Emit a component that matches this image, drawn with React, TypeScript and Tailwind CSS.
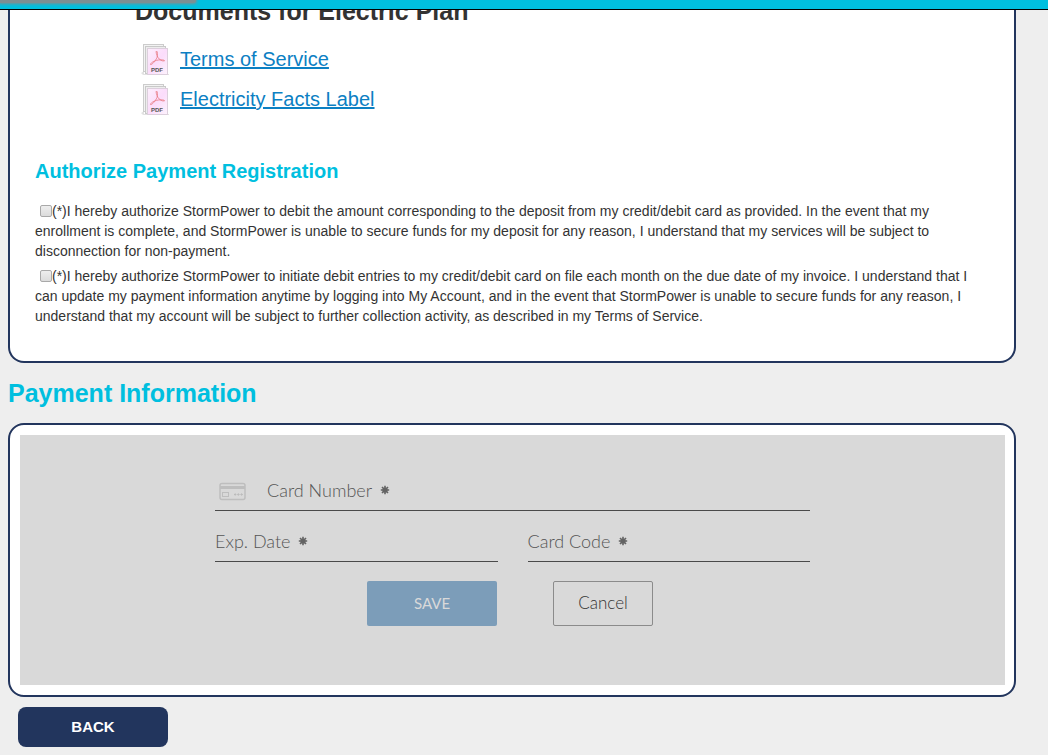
import { useState } from "react";

const documents = ["Terms of Service", "Electricity Facts Label"];

const authorizations = [
  {
    id: "deposit",
    text: "(*)I hereby authorize StormPower to debit the amount corresponding to the deposit from my credit/debit card as provided. In the event that my enrollment is complete, and StormPower is unable to secure funds for my deposit for any reason, I understand that my services will be subject to disconnection for non-payment.",
  },
  {
    id: "monthly",
    text: "(*)I hereby authorize StormPower to initiate debit entries to my credit/debit card on file each month on the due date of my invoice. I understand that I can update my payment information anytime by logging into My Account, and in the event that StormPower is unable to secure funds for any reason, I understand that my account will be subject to further collection activity, as described in my Terms of Service.",
  },
];

const PdfIcon = () => (
  <svg className="h-8 w-8 shrink-0" viewBox="0 0 32 32" aria-hidden="true">
    <defs>
      <linearGradient id="page" x1="0" y1="0" x2="1" y2="1">
        <stop offset="0" stopColor="#fdf0fd" />
        <stop offset="0.5" stopColor="#fbdcfb" />
        <stop offset="1" stopColor="#fdf3fd" />
      </linearGradient>
    </defs>
    <path d="M2 30 L5 28 V31 H30 V32 H4Z" fill="#e2e2e2" />
    <rect x="4.5" y="1.5" width="20" height="27" fill="#f3f3f3" stroke="#cccccc" />
    <rect x="6.5" y="3.5" width="20" height="27" fill="#ededed" stroke="#c9c9c9" />
    <rect x="8.5" y="5.5" width="20" height="26" fill="url(#page)" stroke="#dccfdc" />
    <path
      d="M17.5 8 C16.5 8.5 17.5 11.5 19 14.5 C20.5 17 23.5 18.5 25.5 17.8 C26 16.8 21 16.4 17.5 17.4 C14 18.4 11 20.5 11.5 21.6 C12.7 22.2 16.5 18 18 14.5 C18.8 11.5 18.6 8.5 17.5 8"
      fill="none"
      stroke="#e87882"
      strokeWidth="0.8"
    />
    <text
      x="12"
      y="29"
      fontFamily="Liberation Sans, Arial, sans-serif"
      fontSize="6"
      fontWeight="bold"
      fill="#555555"
    >
      PDF
    </text>
  </svg>
);

const CardIcon = () => (
  <svg className="h-5 w-7 shrink-0" viewBox="0 0 28 20" fill="none" aria-hidden="true">
    <rect x="1" y="1.5" width="25" height="16" rx="2" stroke="#bebebe" strokeWidth="1.5" />
    <rect x="1" y="4" width="25" height="3" fill="#bebebe" />
    <rect x="3.5" y="10.5" width="6" height="4" stroke="#bebebe" />
    <path
      d="M15 12.5h2.4M16.2 11.3v2.4M18.2 12.5h2.4M19.4 11.3v2.4M21.4 12.5h2.4M22.6 11.3v2.4"
      stroke="#bcbcbc"
      strokeWidth="1"
    />
  </svg>
);

const RequiredMark = () => (
  <svg className="h-[10px] w-[10px] shrink-0" viewBox="0 0 10 10" aria-hidden="true">
    <path
      d="M5 0.8V9.2M0.8 5H9.2M2 2L8 8M8 2L2 8"
      stroke="#636363"
      strokeWidth="1.6"
    />
    <circle cx="5" cy="5" r="2.6" fill="#636363" />
  </svg>
);

interface FieldProps {
  id: string;
  label: string;
  withIcon?: boolean;
}

const Field = ({ id, label, withIcon }: FieldProps) => (
  <div className="flex h-[51px] min-w-0 flex-1 items-center border-b border-[#4a4a4a] pt-[10px]">
    {withIcon && (
      <span className="mr-5 ml-1 pt-1">
        <CardIcon />
      </span>
    )}
    <label
      htmlFor={id}
      className="flex shrink-0 items-center gap-2 text-lg leading-6 font-light text-[#555555]"
    >
      {label}
      <RequiredMark />
    </label>
    <input id={id} type="text" className="min-w-0 flex-1 bg-transparent pl-2 outline-none" />
  </div>
);

export default function App() {
  const [checked, setChecked] = useState<string[]>([]);

  const toggle = (id: string) => {
    setChecked(checked.includes(id) ? checked.filter((c) => c !== id) : [...checked, id]);
  };

  return (
    <div className="min-h-screen bg-[#eeeeee] font-['Liberation_Sans',Arial,sans-serif] text-[#333333]">
      <header className="sticky top-0 z-10 h-[10px] overflow-hidden border-b border-black bg-[#00bfdf]">
        <div className="h-[3px] w-[196px] rounded-br bg-[#7b8f93] shadow-[0_0_3px_1px_#7b8f93]" />
      </header>

      <main className="pr-8 pl-2">
        <section className="rounded-b-2xl border-2 border-t-0 border-[#22355d] bg-white px-[25px] pb-[35px]">
          <h2 className="-mt-[13px] pt-px pl-[100px] text-[25px] leading-[26px] font-bold">
            Documents for Electric Plan
          </h2>
          <ul className="mt-[19px] space-y-2 pl-[104px]">
            {documents.map((name) => (
              <li key={name} className="flex h-8 items-center gap-[9px]">
                <PdfIcon />
                <a href="#" className="text-xl text-[#0c80c3] underline">
                  {name}
                </a>
              </li>
            ))}
          </ul>

          <h3 className="mt-10 text-xl leading-8 font-bold text-[#00bfdf]">
            Authorize Payment Registration
          </h3>
          <div className="mt-[14px] space-y-[5px] text-sm">
            {authorizations.map((item) => (
              <label key={item.id} className="block max-w-[945px]">
                <input
                  type="checkbox"
                  checked={checked.includes(item.id)}
                  onChange={() => toggle(item.id)}
                  className="ml-[5px] h-3 w-3 appearance-none rounded-xs border border-[#a9a9a9] bg-linear-to-b from-[#eeeeee] to-[#dcdcdc] align-[-1px] checked:bg-[#22355d]"
                />
                {item.text}
              </label>
            ))}
          </div>
        </section>

        <h2 className="mt-3 text-[25px] leading-9 font-bold text-[#00bfdf]">
          Payment Information
        </h2>

        <section className="mt-3 rounded-2xl border-2 border-[#22355d] bg-white py-[10px] pr-[9px] pl-[10px]">
          <form
            className="bg-[#d9d9d9] px-4 pt-[25px] pb-[59px] font-[Lato,'Open_Sans',sans-serif]"
            onSubmit={(e) => e.preventDefault()}
          >
            <div className="mx-auto max-w-[595px]">
              <div className="flex">
                <Field id="card-number" label="Card Number" withIcon />
              </div>
              <div className="flex gap-[30px]">
                <Field id="exp-date" label="Exp. Date" />
                <Field id="card-code" label="Card Code" />
              </div>
              <div className="mt-[19px] flex justify-center gap-14 pr-[5px]">
                <button
                  type="submit"
                  className="h-[45px] w-[130px] rounded-xs bg-[#7c9db9] pb-px text-[15px] text-[#d9d9d9]"
                >
                  SAVE
                </button>
                <button
                  type="button"
                  className="h-[45px] w-[100px] rounded-xs border border-[#8b8b8b] pb-px text-[17px] font-light text-[#333333]"
                >
                  Cancel
                </button>
              </div>
            </div>
          </form>
        </section>

        <button
          type="button"
          className="mt-[10px] mb-2 ml-[10px] block h-10 w-[150px] rounded-lg bg-[#22355d] text-[15px] font-bold text-white"
        >
          BACK
        </button>
      </main>
    </div>
  );
}
